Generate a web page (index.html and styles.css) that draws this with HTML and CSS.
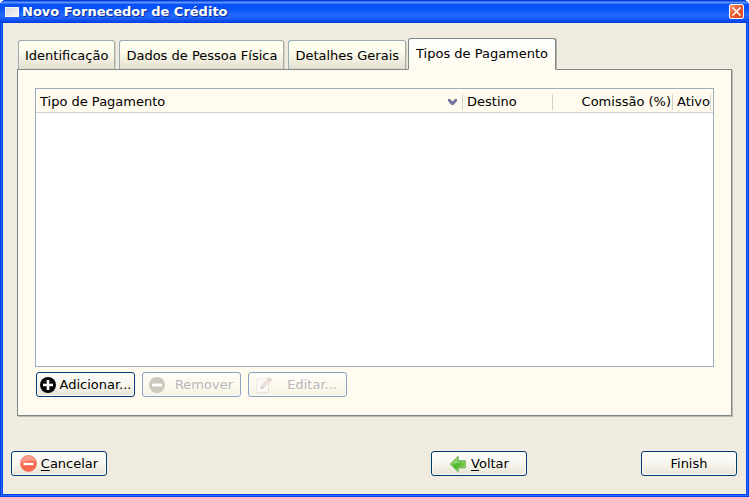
FILE: index.html
```html
<!DOCTYPE html>
<html lang="pt-BR">
<head>
<meta charset="utf-8">
<title>Novo Fornecedor de Crédito</title>
<link rel="stylesheet" href="styles.css">
</head>
<body>
<div class="window">
  <header class="titlebar">
    <span class="app-icon"></span>
    <h1 class="title">Novo Fornecedor de Crédito</h1>
    <button class="close" type="button" aria-label="Fechar">
      <svg width="9" height="9" viewBox="0 0 9 9"><path d="M1 1L8 8M8 1L1 8" stroke="#fff" stroke-width="1.500" stroke-linecap="square"/></svg>
    </button>
  </header>
  <main class="content">
    <div class="tabs" role="tablist">
      <button class="tab" type="button" role="tab" aria-selected="false">Identificação</button>
      <button class="tab" type="button" role="tab" aria-selected="false">Dados de Pessoa Física</button>
      <button class="tab" type="button" role="tab" aria-selected="false">Detalhes Gerais</button>
      <button class="tab tab-active" type="button" role="tab" aria-selected="true">Tipos de Pagamento</button>
    </div>
    <section class="panel" role="tabpanel">
      <div class="list">
        <table class="grid">
          <thead>
            <tr>
              <th class="col-type" scope="col"><div class="cell"><span>Tipo de Pagamento</span>
                <svg class="sort" width="9" height="6" viewBox="0 0 9 6"><path d="M0 0H2L4.500 2.500L7 0H9V2L5.500 6H3.500L0 2Z" fill="#72729c"/></svg></div></th>
              <th class="col-dest" scope="col"><div class="cell">Destino</div></th>
              <th class="col-fee" scope="col"><div class="cell cell-end">Comissão (%)</div></th>
              <th class="col-active" scope="col"><div class="cell">Ativo</div></th>
            </tr>
          </thead>
          <tbody></tbody>
        </table>
      </div>
      <div class="actions">
        <button class="button" type="button">
          <svg class="icon" width="16" height="16" viewBox="0 0 16 16"><circle cx="8" cy="8" r="8" fill="#080808"/><path d="M8 3V13M3 8H13" stroke="#fff" stroke-width="2.600"/></svg>
          <span>Adicionar...</span>
        </button>
        <button class="button" type="button" disabled>
          <svg class="icon" width="16" height="16" viewBox="0 0 16 16"><circle cx="8" cy="8" r="8" fill="#cbc9be"/><path d="M3 8H13" stroke="#fff" stroke-width="2.800"/></svg>
          <span class="label">Remover</span>
        </button>
        <button class="button" type="button" disabled>
          <svg class="icon" width="18" height="16" viewBox="0 0 18 16"><path d="M1.500 1.500H13.500V15.500H1.500Z" fill="#fbf9f5" stroke="#f0ede6"/><path d="M3 15.500H13.500V10" fill="none" stroke="#e4e1da"/><path d="M6 12L7 8.500L13.500 1.500Q15 .5 16.500 2.500L9.500 10Z" fill="#f4e6d9" stroke="#dfd0c8"/><path d="M13 2L16 4.500" stroke="#e0c6c2" stroke-width="1.500"/><path d="M6 12L7 9.500L8.500 11Z" fill="#d0c8c2"/></svg>
          <span class="label">Editar...</span>
        </button>
      </div>
    </section>
    <footer class="footer">
      <button class="button" type="button">
        <svg class="icon" width="17" height="17" viewBox="0 0 17 17"><defs><linearGradient id="red" x2="0" y2="1"><stop stop-color="#ff9884"/><stop offset=".5" stop-color="#f5644c"/><stop offset="1" stop-color="#fb6a50"/></linearGradient></defs><circle cx="8.500" cy="8.500" r="8" fill="url(#red)" stroke="#e87865" stroke-width=".8"/><path d="M1 9Q7 4 15.500 6A7.500 7.500 0 0 0 1 9Z" fill="#fff" opacity=".22"/><path d="M3.500 9H13.500" stroke="#fff" stroke-width="2.400"/></svg>
        <span><u>C</u>ancelar</span>
      </button>
      <button class="button button-back" type="button">
        <svg class="icon" width="18" height="18" viewBox="0 0 18 18"><defs><linearGradient id="green" x2="1" y2="1"><stop stop-color="#b4e48c"/><stop offset=".5" stop-color="#50b82e"/><stop offset="1" stop-color="#98dc60"/></linearGradient></defs><path d="M1 9L9.500 .8V5.500H16.500V13H9.500V17.200Z" fill="url(#green)" stroke="#84b870" stroke-width=".8"/><path d="M3 9L8.500 3.500V6.500H15.500V8Q9 7 3 9Z" fill="#fff" opacity=".3"/></svg>
        <span><u>V</u>oltar</span>
      </button>
      <button class="button" type="button">Finish</button>
    </footer>
  </main>
</div>
</body>
</html>
```
FILE: styles.css
```css
* { box-sizing: border-box; }

body {
  margin: 0;
  background: #fff;
  color: #000;
  font: 13px/16px "DejaVu Sans", sans-serif;
}

button {
  margin: 0;
  color: inherit;
  font: inherit;
}

.window {
  display: flex;
  flex-direction: column;
  min-height: 100vh;
  padding: 0 3px 3px;
  border-radius: 6px 6px 0 0;
  background: #0048f0;
  box-shadow: inset 0 0 0 1px #0040e0, inset 0 0 0 2px #2668ff;
}

.titlebar {
  display: flex;
  align-items: center;
  height: 23px;
  margin: 0 -3px;
  padding: 0 5px;
  border-radius: 6px 6px 0 0;
  background: linear-gradient(#0040d8 0 1px, #5a94ff 2px 3px, #0a50f8 4px, #0450f8 8px, #2468ff 15px, #1c60ff 18px, #003ce0 23px);
}

.app-icon {
  width: 14px;
  height: 10px;
  margin-right: 3px;
  border: 1px solid #f8f8f8;
  background: linear-gradient(135deg, #d8d8dc, #f6f6f8);
}

.title {
  flex: 1;
  margin: 0;
  color: #fff;
  font-size: 13px;
  font-weight: bold;
  line-height: 16px;
  text-shadow: 1px 1px #0c2c8c;
}

.close {
  display: flex;
  align-items: center;
  justify-content: center;
  width: 15px;
  height: 15px;
  padding: 0;
  border: 1px solid #fff;
  border-radius: 2px;
  background: linear-gradient(135deg, #f49878, #e85830 50%, #e04820);
}

.content {
  display: flex;
  flex: 1;
  flex-direction: column;
  padding: 15px 8px 18px;
  background: #efebdf;
}

.tabs {
  display: flex;
  align-items: flex-end;
  gap: 4px;
  margin: 0 6px -1px;
  padding-left: 1px;
}

.tab {
  height: 30px;
  padding: 2px 6px 0;
  border: 1px solid #9aabb4;
  border-right-color: #a8aca4;
  border-bottom-color: #7c8888;
  border-radius: 3px 3px 0 0;
  background: linear-gradient(#fffff0, #fdfded 35%, #e8e4d6 90%, #e0dccd);
  box-shadow: 1px 1px #d4d1c6;
}

.tab-active {
  position: relative;
  height: 32px;
  margin-left: -2px;
  padding: 0 7px;
  border-color: #7c8888;
  border-bottom-color: #fffbef;
  background: linear-gradient(#fff, #fffbef);
  box-shadow: 1px 0 #b4b2a8;
}

.panel {
  display: flex;
  flex: 1;
  flex-direction: column;
  margin: 0 6px 35px;
  padding: 18px 17px;
  border: 1px solid #7c8888;
  background: #fffbef;
  box-shadow: 1px 1px #bcb9ad;
}

.list {
  flex: 1;
  border: 1px solid #9aaec0;
  background: #fff;
}

.grid {
  width: 100%;
  table-layout: fixed;
  border-collapse: separate;
  border-spacing: 0;
}

.grid th {
  height: 24px;
  padding: 2px 0 0;
  border-bottom: 1px solid #d4d1c8;
  background: #fffbef;
  font-weight: normal;
  text-align: left;
  white-space: nowrap;
}

.cell {
  display: flex;
  align-items: center;
  justify-content: space-between;
  padding: 0 4px;
  border-right: 1px solid #d2cfc4;
}

.cell-end {
  justify-content: flex-end;
  padding-right: 1px;
}

.sort { margin-right: 1px; }
.col-dest { width: 90px; }
.col-fee { width: 120px; }
.col-active { width: 40px; }
.col-active .cell { margin-right: 2px; }

.actions {
  display: flex;
  gap: 7px;
  margin-top: 5px;
  padding-left: 1px;
}

.button {
  display: flex;
  align-items: center;
  justify-content: center;
  gap: 4px;
  width: 99px;
  height: 25px;
  padding: 0 3px;
  border: 1px solid #003c74;
  border-radius: 3px;
  background: linear-gradient(#fff, #f6f4ec 55%, #e8e4d4);
  box-shadow: inset 0 0 0 1px #fbfaf6;
  white-space: nowrap;
}

.button:disabled {
  justify-content: space-between;
  padding: 0 7px 0 6px;
  border-color: #87a3c0;
  background: linear-gradient(#fffef8, #fbf9ec 60%, #f3f3e2);
  color: #b8b4b4;
  text-shadow: 1px 1px #fff;
}

.button:disabled:last-child { padding-right: 9px; }

.icon { flex: none; }

.footer {
  display: flex;
  align-items: center;
  padding-right: 1px;
}

.footer .button { width: 96px; }

.footer .button-back {
  margin-right: 114px;
  margin-left: auto;
}

u { text-underline-offset: 2px; }
```
